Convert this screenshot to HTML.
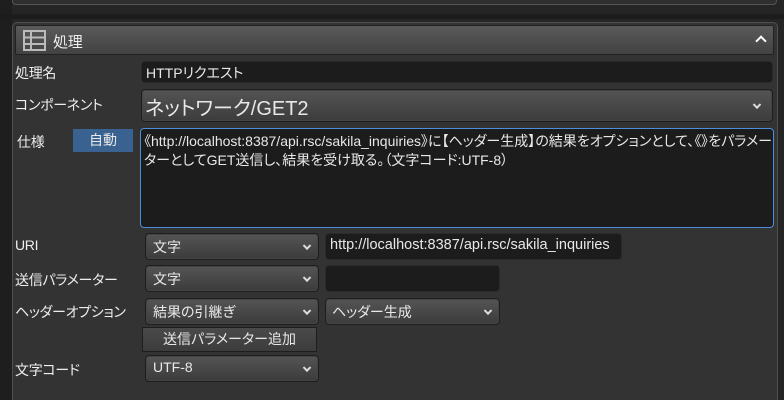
<!DOCTYPE html>
<html><head><meta charset="utf-8"><style>
*{box-sizing:border-box;margin:0;padding:0}
html{overflow:hidden;width:784px;height:400px}
body{width:784px;height:400px;background:#252525;overflow:hidden;position:relative;font-family:"Liberation Sans","Noto Sans CJK JP",sans-serif;color:#e8e8e8;font-size:14px;font-feature-settings:"palt"}
.abs{position:absolute}
.top{left:12px;top:-10px;width:765px;height:15px;border:1px solid #555;border-radius:4px;background:#2f2f2f}
.panel{left:12px;top:22px;width:766px;height:385px;border:1px solid #505050;border-radius:5px;background:#333}
.hdr{left:15px;top:25px;width:759px;height:30px;background:linear-gradient(#5a5a5a,#424242);border:1px solid #222;border-radius:2px}
.lbl{font-size:14px;color:#eee;white-space:nowrap;letter-spacing:-0.3px}
.inp{background:#1c1c1c;border:1px solid #2a2a2a;border-radius:4px}
.dd{background:linear-gradient(#545454,#3c3c3c);border:1px solid #1e1e1e;border-radius:4px;box-shadow:0 0 0 1px #444 inset}
.txt{white-space:nowrap}
.chev{position:absolute;right:8px;top:50%;width:6px;height:6px;border-right:2px solid #ddd;border-bottom:2px solid #ddd;transform:translateY(-70%) rotate(45deg)}
</style></head><body>
<div class="abs" style="left:0;top:0;width:12px;height:400px;background:#1e1e1e"></div>
<div class="abs top"></div>
<div class="abs" style="left:0;top:14px;width:784px;height:5px;background:#1c1c1c"></div>
<div class="abs panel"></div>
<div class="abs hdr"></div>
<svg class="abs" style="left:23px;top:30px" width="23" height="21" viewBox="0 0 23 21"><g fill="none" stroke="#bbb" stroke-width="2"><rect x="1" y="1" width="21" height="19"/><line x1="1" y1="7.5" x2="22" y2="7.5"/><line x1="1" y1="14" x2="22" y2="14"/><line x1="8" y1="1" x2="8" y2="20"/></g></svg>
<div class="abs lbl" style="left:53px;top:31px;font-size:15px">処理</div>
<div class="abs" style="left:757px;top:37px;width:8px;height:8px;border-left:2px solid #fff;border-top:2px solid #fff;transform:rotate(45deg)"></div>

<div class="abs lbl" style="left:15px;top:63px">処理名</div>
<div class="abs inp txt" style="left:141px;top:61px;width:632px;height:22px;padding:1px 4px;font-size:14px">HTTPリクエスト</div>

<div class="abs lbl" style="left:15px;top:95px">コンポーネント</div>
<div class="abs dd txt" style="left:141px;top:89px;width:632px;height:33px;font-size:20px;padding:2px 3px">ネットワーク/GET2<span class="chev" style="right:12px"></span></div>

<div class="abs lbl" style="left:17px;top:132px">仕様</div>
<div class="abs" style="left:73px;top:129px;width:60px;height:23px;background:#3a6290;text-align:center;line-height:23px;font-size:14px">自動</div>
<div class="abs inp" style="left:140px;top:128px;width:634px;height:100px;border:1px solid #4a8fdc;padding:3px 3px;font-size:14px;line-height:19px;white-space:nowrap;overflow:hidden">《http://localhost:8387/api.rsc/sakila_inquiries》に【ヘッダー生成】の結果をオプションとして、《》をパラメー<br>ターとしてGET送信し、結果を受け取る。（文字コード:UTF-8）</div>

<div class="abs lbl" style="left:15px;top:237px">URI</div>
<div class="abs dd txt" style="left:145px;top:233px;width:174px;height:27px;padding:3px 7px">文字<span class="chev"></span></div>
<div class="abs inp txt" style="left:325px;top:233px;width:297px;height:27px;padding:3px 4px;font-size:14.5px">http://localhost:8387/api.rsc/sakila_inquiries</div>

<div class="abs lbl" style="left:15px;top:270px">送信パラメーター</div>
<div class="abs dd txt" style="left:145px;top:265px;width:174px;height:27px;padding:3px 7px">文字<span class="chev"></span></div>
<div class="abs inp" style="left:325px;top:265px;width:175px;height:27px"></div>

<div class="abs lbl" style="left:15px;top:302px">ヘッダーオプション</div>
<div class="abs dd txt" style="left:145px;top:298px;width:174px;height:27px;padding:3px 7px">結果の引継ぎ<span class="chev"></span></div>
<div class="abs dd txt" style="left:325px;top:298px;width:175px;height:27px;padding:3px 6px">ヘッダー生成<span class="chev"></span></div>

<div class="abs txt" style="left:142px;top:327px;width:175px;height:25px;background:linear-gradient(#4a4a4a,#3c3c3c);border:1px solid #1e1e1e;text-align:center;line-height:23px">送信パラメーター追加</div>

<div class="abs lbl" style="left:15px;top:360px">文字コード</div>
<div class="abs dd txt" style="left:145px;top:355px;width:174px;height:27px;padding:3px 7px">UTF-8<span class="chev"></span></div>
</body></html>
